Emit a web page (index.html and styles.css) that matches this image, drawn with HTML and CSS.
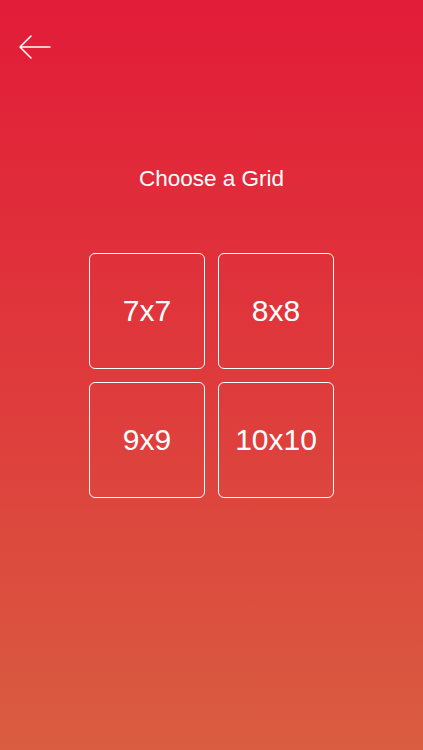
FILE: index.html
```html
<!DOCTYPE html>
<html>
<head>
<meta charset="utf-8">
<link rel="stylesheet" href="styles.css">
</head>
<body>
<div class="screen">
  <div class="topbar">
    <svg class="back" width="34" height="26" viewBox="0 0 34 26">
      <path d="M2 13 H32 M13 2 L2 13 L13 24" fill="none" stroke="#fff" stroke-width="1.5" stroke-linecap="round" stroke-linejoin="round"/>
    </svg>
  </div>
  <h1 class="title">Choose a Grid</h1>
  <div class="grid">
    <div class="cell">7x7</div>
    <div class="cell">8x8</div>
    <div class="cell">9x9</div>
    <div class="cell">10x10</div>
  </div>
</div>
</body>
</html>
```
FILE: styles.css
```css
html, body {
  margin: 0;
  padding: 0;
}
body {
  width: 423px;
  height: 750px;
  overflow: hidden;
  font-family: "Liberation Sans", Arial, sans-serif;
  color: #fff;
}
.screen {
  height: 750px;
  background: linear-gradient(180deg, #e21c38 0%, #df3a3c 50%, #d95d40 100%);
  display: flex;
  flex-direction: column;
  align-items: center;
}
.topbar {
  align-self: stretch;
  height: 70px;
  padding: 34px 0 0 18px;
  box-sizing: border-box;
}
.back {
  display: block;
}
.title {
  margin: 96px 0 0;
  font-size: 22.5px;
  font-weight: normal;
  line-height: 26px;
}
.grid {
  margin-top: 61px;
  display: grid;
  grid-template-columns: 116px 116px;
  grid-auto-rows: 116px;
  gap: 13px 13px;
}
.cell {
  border: 1.6px solid #fff;
  border-radius: 6px;
  display: flex;
  align-items: center;
  justify-content: center;
  font-size: 30px;
}
```
